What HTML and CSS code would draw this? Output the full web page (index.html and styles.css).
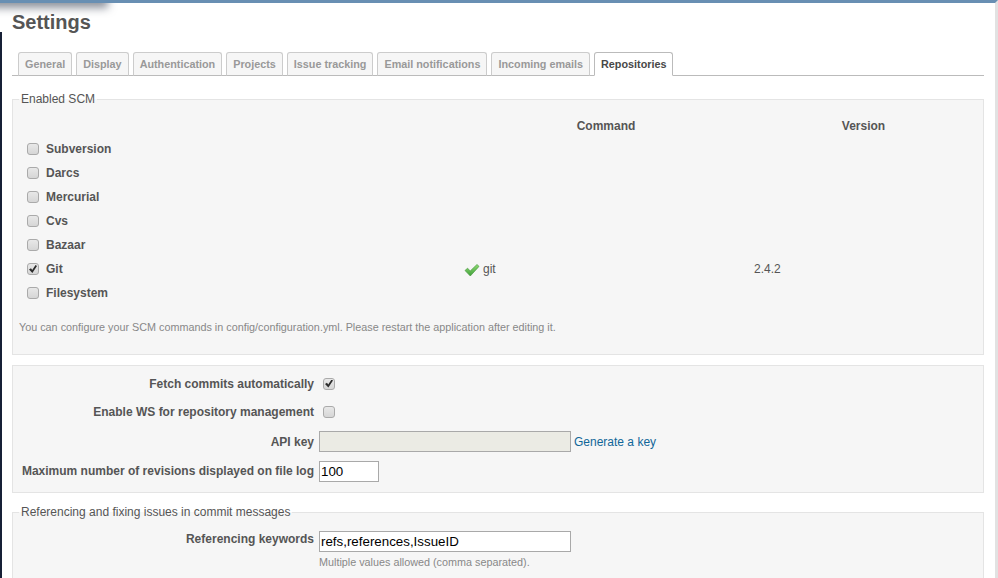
FILE: index.html
```html
<!DOCTYPE html>
<html lang="en">
<head>
<meta charset="utf-8">
<title>Settings</title>
<link rel="stylesheet" href="styles.css">
</head>
<body>
<div class="top-shadow"></div>
<div class="left-edge"></div>
<main class="content">
  <h2 class="title">Settings</h2>
  <nav class="tabs">
    <a class="tab">General</a>
    <a class="tab">Display</a>
    <a class="tab">Authentication</a>
    <a class="tab">Projects</a>
    <a class="tab">Issue tracking</a>
    <a class="tab">Email notifications</a>
    <a class="tab">Incoming emails</a>
    <a class="tab selected">Repositories</a>
  </nav>

  <fieldset class="box scm">
    <legend>Enabled SCM</legend>
    <table class="scm-table">
      <thead>
        <tr><th class="col-name"></th><th class="col-cmd">Command</th><th class="col-ver">Version</th></tr>
      </thead>
      <tbody>
        <tr><td class="name"><label><input type="checkbox">Subversion</label></td><td></td><td></td></tr>
        <tr><td class="name"><label><input type="checkbox">Darcs</label></td><td></td><td></td></tr>
        <tr><td class="name"><label><input type="checkbox">Mercurial</label></td><td></td><td></td></tr>
        <tr><td class="name"><label><input type="checkbox">Cvs</label></td><td></td><td></td></tr>
        <tr><td class="name"><label><input type="checkbox">Bazaar</label></td><td></td><td></td></tr>
        <tr>
          <td class="name"><label><input type="checkbox" checked>Git</label></td>
          <td class="cmd"><svg class="ok" width="16" height="14" viewBox="0 0 16 14"><defs><linearGradient id="okg" x1="0" y1="0" x2="0" y2="1"><stop offset="0" stop-color="#8fdc72"/><stop offset="1" stop-color="#3f9f3a"/></linearGradient></defs><path d="M1 7.5 3.6 5.2 6.2 8 13 1.5 15 3.4 6.3 13Z" fill="url(#okg)" stroke="#4a9a42" stroke-width=".7" stroke-linejoin="round"/></svg>git</td>
          <td class="ver">2.4.2</td>
        </tr>
        <tr><td class="name"><label><input type="checkbox">Filesystem</label></td><td></td><td></td></tr>
      </tbody>
    </table>
    <p class="note">You can configure your SCM commands in config/configuration.yml. Please restart the application after editing it.</p>
  </fieldset>

  <div class="box form-box">
    <div class="row r-1"><label class="lbl">Fetch commits automatically</label><input type="checkbox" class="cb-form" checked></div>
    <div class="row r-2"><label class="lbl">Enable WS for repository management</label><input type="checkbox" class="cb-form"></div>
    <div class="row r-3"><label class="lbl">API key</label><input type="text" class="text wide" disabled><a class="link">Generate a key</a></div>
    <div class="row r-4"><label class="lbl">Maximum number of revisions displayed on file log</label><input type="text" class="text short" value="100"></div>
  </div>

  <fieldset class="box refs">
    <legend>Referencing and fixing issues in commit messages</legend>
    <div class="row ref-row"><label class="lbl lbl-high">Referencing keywords</label><input type="text" class="text wide" value="refs,references,IssueID"></div>
    <p class="hint">Multiple values allowed (comma separated).</p>
  </fieldset>
</main>
</body>
</html>
```

FILE: styles.css
```css
* { box-sizing: border-box; }
html, body { height: 100%; }
html { overflow: hidden; }
body {
  margin: 0;
  background: #fff;
  border-top: 3px solid #688fb3;
  border-right: 3px solid #e2e2e2;
  font: 12px/14px "Liberation Sans", Arial, sans-serif;
  color: #555;
  position: relative;
  overflow: hidden;
}
.top-shadow {
  position: absolute;
  left: -10px;
  top: -12px;
  width: 115px;
  height: 12px;
  box-shadow: 0 2px 9px 3px rgba(30, 40, 60, .5);
}
.left-edge {
  position: absolute;
  left: 0;
  top: 29px;
  bottom: 0;
  width: 2px;
  background: #172036;
}
.content { padding: 0 11px 0 12px; }
.title {
  margin: 0;
  padding-top: 8px;
  font-size: 20px;
  line-height: 23px;
  font-weight: bold;
  color: #555;
}
.tabs {
  display: flex;
  gap: 4px;
  height: 24px;
  margin-top: 18px;
  padding-left: 6px;
  border-bottom: 1px solid #bbb;
}
.tab {
  height: 24px;
  padding: 4px 6px 0;
  border: 1px solid #ccc;
  border-bottom: 1px solid #bbb;
  border-radius: 3px 3px 0 0;
  background: #f6f6f6;
  font-size: 10.8px;
  line-height: 14px;
  font-weight: bold;
  color: #999;
  white-space: nowrap;
}
.tab.selected {
  background: #fff;
  color: #484848;
  border-color: #bbb;
  border-bottom-color: #fff;
}
.box {
  margin: 0;
  background: #f6f6f6;
  border: 1px solid #e4e4e4;
  min-width: 0;
}
legend { padding: 0 2px; margin: 0; line-height: 14px; color: #555; }
.scm { margin-top: 16px; padding: 8px 6px 0; height: 263px; }
.scm-table { border-collapse: collapse; table-layout: fixed; width: 956px; }
.scm-table th, .scm-table td { padding: 0; height: 24px; text-align: left; font-weight: normal; }
.scm-table th { height: 23px; font-weight: bold; text-align: center; }
.col-name { width: 441px; }
.col-cmd { width: 292px; }
.col-ver { width: 223px; }
.name { font-weight: bold !important; padding-left: 8px !important; }
.name label { display: flex; align-items: center; }
.name input { margin: 0 7px 0 0; }
.cmd { padding-left: 4px !important; }
.ver { padding-left: 2px !important; }
.ok { vertical-align: -4px; margin-right: 3px; }
.note { margin: 15px 0 0; color: #888; font-size: 10.8px; line-height: 14px; }

input[type="checkbox"] {
  appearance: none;
  position: relative;
  width: 12px;
  height: 12px;
  flex: none;
  border: 1px solid #aaa;
  border-radius: 3px;
  background: linear-gradient(#e8e8e8, #d6d6d6);
}
input[type="checkbox"]:checked::after {
  content: "";
  position: absolute;
  inset: 1px;
  background: #2c2c2c;
  clip-path: polygon(0 55%, 25% 40%, 40% 62%, 82% 0, 100% 12%, 42% 100%);
}

.form-box { margin-top: 10px; height: 128px; padding-top: 4px; }
.row { display: flex; align-items: center; }
.lbl {
  width: 301px;
  margin-right: 5px;
  flex: none;
  text-align: right;
  font-weight: bold;
  white-space: nowrap;
}
.r-1 { height: 27px; }
.r-2 { height: 29px; }
.r-3 { height: 31px; }
.r-4 { height: 28px; }
.cb-form { margin: 0 0 0 4px; }
.text {
  height: 21px;
  margin: 0;
  padding: 1px;
  border: 1px solid #a9a9a9;
  background: #fff;
  color: #000;
  font: 13.33px "Liberation Sans", Arial, sans-serif;
  border-radius: 0;
  outline: none;
}
.text.wide { width: 252px; }
.text.short { width: 60px; }
.text:disabled { background: #ebebe4; }
.link { margin-left: 3px; color: #169; }
.refs { margin-top: 12px; height: 90px; padding: 0 0 0 6px; }
.ref-row { margin-top: 12px; margin-left: -6px; }
.lbl-high { padding-bottom: 5px; }
.hint { margin: 3px 0 0 300px; font-size: 10.8px; line-height: 14px; color: #888; }
```
